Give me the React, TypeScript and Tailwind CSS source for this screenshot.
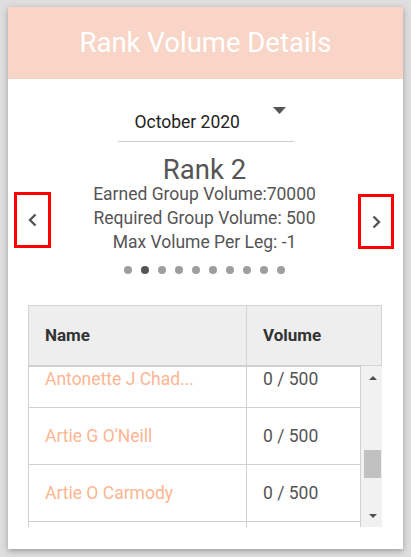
import React from 'react'

const ROWS = [
  { name: 'Antonette J Chad...', volume: '0 / 500' },
  { name: "Artie G O'Neill", volume: '0 / 500' },
  { name: 'Artie O Carmody', volume: '0 / 500' },
  { name: '', volume: '' },
]

function Chevron({ dir }: { dir: 'left' | 'right' }) {
  return (
    <svg width="11" height="14" viewBox="0 0 11 14" aria-hidden="true">
      <polyline
        points={dir === 'left' ? '8.5,1.5 3,7 8.5,12.5' : '2.5,1.5 8,7 2.5,12.5'}
        fill="none"
        stroke="#555555"
        strokeWidth="2.4"
      />
    </svg>
  )
}

export default function App() {
  const active = 1
  return (
    <div className="min-h-[557px] w-[411px] bg-[#dedede] pt-[7px] font-['Roboto','Liberation_Sans',sans-serif]">
      <div className="mx-[8px] flex h-[542px] w-[395px] flex-col bg-white shadow-[0_2px_6px_rgba(0,0,0,0.3)]">
        {/* Header */}
        <div className="flex h-[72px] items-center justify-center bg-[#f8d5c7]">
          <h1 className="text-[27.5px] leading-none text-white">Rank Volume Details</h1>
        </div>

        {/* Month select */}
        <div className="relative mx-auto mt-[21px] h-[42px] w-[176px] border-b border-[#cccccc]">
          <span className="block pl-[17px] pt-[10px] text-[17.5px] leading-6 text-[#222222]">October 2020</span>
          <svg className="absolute right-[8px] top-[7px]" width="13" height="7" viewBox="0 0 13 7" aria-hidden="true">
            <polygon points="0,0 13,0 6.5,7" fill="#555555" />
          </svg>
        </div>

        {/* Rank carousel */}
        <div className="mt-[15px] flex items-start">
          <button className="ml-[6px] mt-[35px] flex h-[56px] w-[37px] items-center justify-center border-[3px] border-[#ff0000]">
            <Chevron dir="left" />
          </button>
          <div className="flex flex-1 flex-col items-center text-[#555555]">
            <div className="text-[27.5px] leading-[25px]">Rank 2</div>
            <div className="text-[17.5px] leading-6">Earned Group Volume:70000</div>
            <div className="text-[17.5px] leading-6">Required Group Volume: 500</div>
            <div className="text-[17.5px] leading-6">Max Volume Per Leg: -1</div>
            <div className="mt-[12px] flex gap-[9px]">
              {Array.from({ length: 10 }).map((_, i) => (
                <span
                  key={i}
                  className={i === active ? 'h-2 w-2 rounded-full bg-[#555555]' : 'h-2 w-2 rounded-full bg-[#9e9e9e]'}
                />
              ))}
            </div>
          </div>
          <button className="mr-[9px] mt-[37px] flex h-[55px] w-[36px] items-center justify-center border-[3px] border-[#ff0000]">
            <Chevron dir="right" />
          </button>
        </div>

        {/* Table */}
        <div className="ml-[20px] mr-[21px] mt-[31px]">
          <div className="flex h-[60px] border border-b-0 border-[#d4d4d4] bg-[#eeeeee] text-[17px] font-bold text-[#333333]">
            <div className="flex w-[218px] items-center border-r border-[#d4d4d4] pl-[16px]">Name</div>
            <div className="flex flex-1 items-center pl-[16px]">Volume</div>
          </div>
          <div className="flex h-[162px]">
            <div className="w-[333px] overflow-hidden border-l border-r border-t-2 border-[#d0d0d0]">
              <div className="-mt-[16px]">
                {ROWS.map((r, i) => (
                  <div key={i} className="flex h-[57px] border-b border-[#d0d0d0] text-[17.5px]">
                    <div className="flex w-[218px] items-center truncate border-r border-[#d0d0d0] pl-[16px] text-[#fdb592]">
                      {r.name}
                    </div>
                    <div className="flex flex-1 items-center pl-[16px] text-[#555555]">{r.volume}</div>
                  </div>
                ))}
              </div>
            </div>
            {/* Scrollbar */}
            <div className="flex w-[21px] flex-col border-t border-[#d4d4d4] bg-[#f1f1f1]">
              <div className="flex h-[14px] items-end justify-center pl-[2px]">
                <svg width="8" height="4" viewBox="0 0 8 4" aria-hidden="true">
                  <polygon points="0,4 8,4 4,0" fill="#505050" />
                </svg>
              </div>
              <div className="ml-[3px] mt-[70px] h-[28px] w-[17px] bg-[#c1c1c1]" />
              <div className="mt-[36px] flex h-[4px] justify-center pl-[2px]">
                <svg width="8" height="4" viewBox="0 0 8 4" aria-hidden="true">
                  <polygon points="0,0 8,0 4,4" fill="#505050" />
                </svg>
              </div>
            </div>
          </div>
        </div>
      </div>
    </div>
  )
}
